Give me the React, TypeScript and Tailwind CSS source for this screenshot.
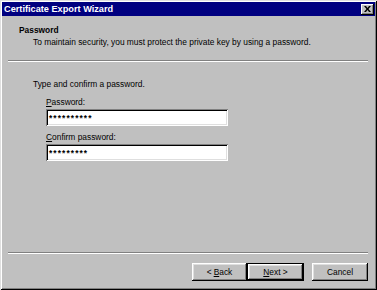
const font = { fontFamily: '"Liberation Sans", Arial, sans-serif' };

const Field = ({ mnemonic, rest, value }: { mnemonic: string; rest: string; value: string }) => (
  <div className="flex flex-col">
    <div className="h-[11px] leading-[11px]">
      <span className="underline underline-offset-1">{mnemonic}</span>
      {rest}
    </div>
    <div className="mt-[1px] w-[182px] h-[17px] bg-white shadow-[inset_1px_1px_#808080,inset_-1px_-1px_#fff,inset_2px_2px_#000,inset_-2px_-2px_#dfdfdf] flex items-center pl-[3px]">
      <span className="tracking-[1.1px] text-[8.4px] leading-[9px] pt-[1px] font-bold">{value}</span>
    </div>
  </div>
);

const Button = ({ children, w, def }: { children: React.ReactNode; w: string; def?: boolean }) => (
  <div className={`${w} h-[18px] ${def ? "border border-black" : ""}`}>
    <div className="w-full h-full flex items-center justify-center shadow-[inset_-1px_-1px_#000,inset_1px_1px_#fff,inset_-2px_-2px_#808080,inset_2px_2px_#dfdfdf]">
      {children}
    </div>
  </div>
);

export default function App() {
  return (
    <div
      style={font}
      className="w-[377px] h-[290px] bg-[#c0c0c0] text-black text-[8.4px] leading-[11px] p-[2px] flex flex-col shadow-[inset_1px_1px_#dfdfdf,inset_-1px_-1px_#000,inset_2px_2px_#fff,inset_-2px_-2px_#808080]"
    >
      {/* title bar */}
      <div className="h-[14px] bg-[#000080] flex items-center justify-between pl-[2px] pr-[1px]">
        <span className="text-white font-bold text-[9.2px] leading-[14px]">Certificate Export Wizard</span>
        <div className="w-[13px] h-[11px] bg-[#c0c0c0] flex items-center justify-center shadow-[inset_-1px_-1px_#000,inset_1px_1px_#fff,inset_-2px_-2px_#808080]">
          <svg width="7" height="6" viewBox="0 0 7 6">
            <path d="M0 0h2l1.5 2 1.5-2h2L4.5 3 7 6H5L3.5 4 2 6H0l2.5-3z" fill="#000" />
          </svg>
        </div>
      </div>

      {/* header */}
      <div className="h-[44px] pt-[9px]">
        <div className="pl-[17px] font-bold">Password</div>
        <div className="pl-[31px] mt-[1px]">To maintain security, you must protect the private key by using a password.</div>
      </div>
      <div className="ml-[6px] mr-[7px] h-[2px] border-t border-[#808080] border-b border-b-white" />

      {/* body */}
      <div className="flex-1 flex flex-col pl-[31px] pt-[17px]">
        <div>Type and confirm a password.</div>
        <div className="pl-[13px] mt-[7px] flex flex-col gap-[6px]">
          <Field mnemonic="P" rest="assword:" value="**********" />
          <Field mnemonic="C" rest="onfirm password:" value="*********" />
        </div>
      </div>

      <div className="ml-[6px] mr-[7px] h-[2px] border-t border-[#808080] border-b border-b-white" />

      {/* buttons */}
      <div className="h-[34px] flex items-start justify-end pr-[7px] pt-[9px]">
        <Button w="w-[55px]">
          &lt; <span className="underline underline-offset-1 ml-[2px]">B</span>ack
        </Button>
        <Button w="w-[57px]" def>
          <span className="underline underline-offset-1">N</span>ext &gt;
        </Button>
        <div className="w-[8px]" />
        <Button w="w-[56px]">Cancel</Button>
      </div>
    </div>
  );
}
